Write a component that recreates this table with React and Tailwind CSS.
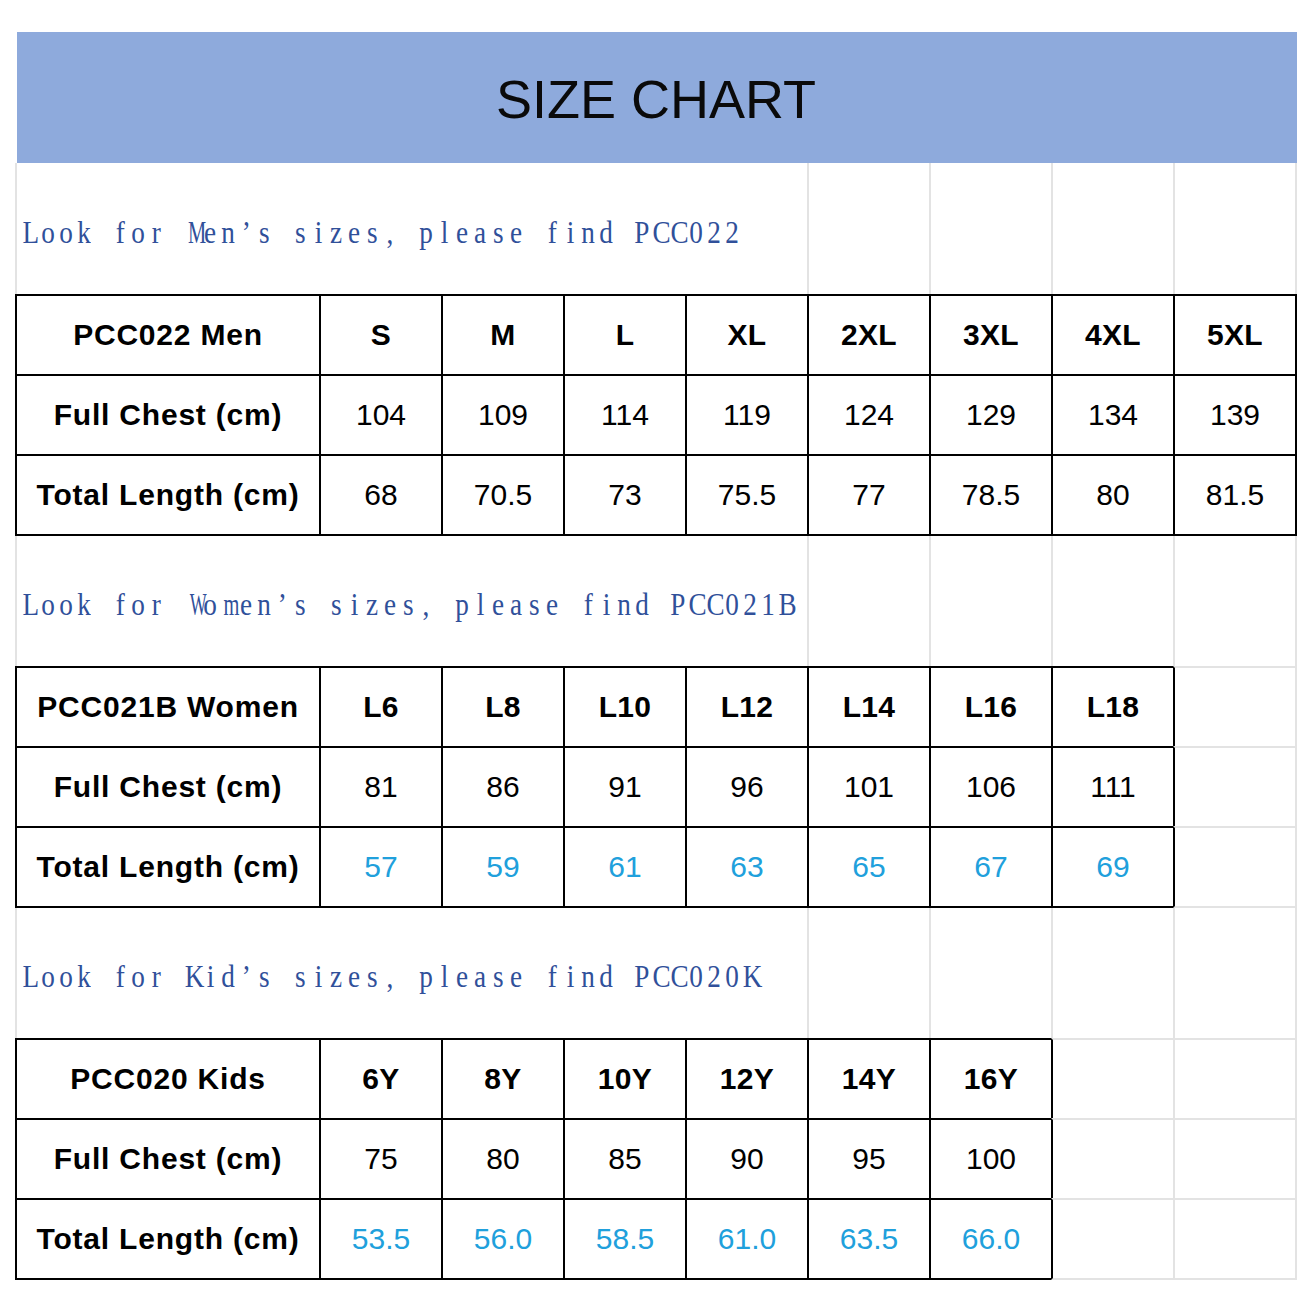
import React from "react";

const COLS = "grid grid-cols-[304px_122px_122px_122px_122px_122px_122px_122px_124px]";

function MonoText({ text }) {
  return (
    <div className="flex font-['Liberation_Serif','Times_New_Roman',serif] text-[32px] leading-none text-[#30509a]">
      {Array.from(text).map((ch, i) => {
        let sc = "scale-x-[0.85]";
        if (ch === "W" || ch === "w") sc = "scale-x-[0.56]";
        else if (ch === "M" || ch === "m") sc = "scale-x-[0.64]";
        return (
          <span key={i} className="inline-block w-[18px] text-center whitespace-pre">
            <span className={`inline-block ${sc}`}>{ch === " " ? "\u00a0" : ch}</span>
          </span>
        );
      })}
    </div>
  );
}

function TextRow({ text, tall }) {
  const h = tall ? "h-[131px]" : "h-[130px]";
  return (
    <div className={COLS}>
      <div className={`col-span-5 ${h} border-l-2 border-[#e3e3e3] flex items-center pl-[4px] pt-[6px]`}>
        <MonoText text={text} />
      </div>
      <div className={`${h} border-l-2 border-[#e3e3e3]`} />
      <div className={`${h} border-l-2 border-[#e3e3e3]`} />
      <div className={`${h} border-l-2 border-[#e3e3e3]`} />
      <div className={`${h} border-l-2 border-r-2 border-[#e3e3e3]`} />
    </div>
  );
}

function Table({ rows, count }) {
  return (
    <div className={`${COLS} font-['Liberation_Sans',Arial,sans-serif] text-black`}>
      {rows.map((row, r) => {
        const last = r === rows.length - 1;
        const cells = [];
        for (let c = 0; c < 9; c++) {
          const real = c <= count;
          let cls = last ? "h-[82px] " : "h-[80px] ";
          if (real) {
            cls += "flex items-center justify-center border-l-2 border-t-2 border-black ";
            if (c === 8) cls += "border-r-2 ";
            if (last) cls += "border-b-2 ";
            let content;
            if (c === 0) {
              content = <span className="text-[30px] font-bold tracking-[0.8px] leading-none">{row.label}</span>;
            } else if (r === 0) {
              content = <span className="text-[30px] font-bold tracking-[0.3px] leading-none">{row.values[c - 1]}</span>;
            } else {
              content = (
                <span className={`text-[30px] leading-none ${row.blue ? "text-[#20a0dc]" : "text-black"}`}>
                  {row.values[c - 1]}
                </span>
              );
            }
            cells.push(<div key={c} className={cls}>{content}</div>);
          } else {
            const first = c === count + 1;
            cls += "border-t-2 border-t-[#e3e3e3] ";
            cls += first ? "border-l-2 border-l-black " : "border-l-2 border-l-[#e3e3e3] ";
            if (c === 8) cls += "border-r-2 border-r-[#e3e3e3] ";
            if (last) cls += "border-b-2 border-b-[#e3e3e3] ";
            cells.push(<div key={c} className={cls} />);
          }
        }
        return <React.Fragment key={r}>{cells}</React.Fragment>;
      })}
    </div>
  );
}

const men = [
  { label: "PCC022 Men", values: ["S", "M", "L", "XL", "2XL", "3XL", "4XL", "5XL"] },
  { label: "Full Chest (cm)", values: ["104", "109", "114", "119", "124", "129", "134", "139"] },
  { label: "Total Length (cm)", values: ["68", "70.5", "73", "75.5", "77", "78.5", "80", "81.5"] },
];

const women = [
  { label: "PCC021B Women", values: ["L6", "L8", "L10", "L12", "L14", "L16", "L18"] },
  { label: "Full Chest (cm)", values: ["81", "86", "91", "96", "101", "106", "111"] },
  { label: "Total Length (cm)", values: ["57", "59", "61", "63", "65", "67", "69"], blue: true },
];

const kids = [
  { label: "PCC020 Kids", values: ["6Y", "8Y", "10Y", "12Y", "14Y", "16Y"] },
  { label: "Full Chest (cm)", values: ["75", "80", "85", "90", "95", "100"] },
  { label: "Total Length (cm)", values: ["53.5", "56.0", "58.5", "61.0", "63.5", "66.0"], blue: true },
];

export default function App() {
  return (
    <div className="w-[1312px] h-[1312px] bg-white pt-[32px] overflow-hidden">
      <div className="ml-[17px] w-[1280px] h-[131px] bg-[#8eaadc] flex items-center justify-center">
        <span className="font-['Liberation_Sans',Arial,sans-serif] text-[54px] leading-none text-[#0a0a0a] pt-[2px] pr-[2px]">
          SIZE CHART
        </span>
      </div>
      <div className="ml-[15px] w-[1282px]">
        <TextRow text="Look for Men’s sizes, please find PCC022" tall />
        <Table rows={men} count={8} />
        <TextRow text="Look for Women’s sizes, please find PCC021B" />
        <Table rows={women} count={7} />
        <TextRow text="Look for Kid’s sizes, please find PCC020K" />
        <Table rows={kids} count={6} />
      </div>
    </div>
  );
}
